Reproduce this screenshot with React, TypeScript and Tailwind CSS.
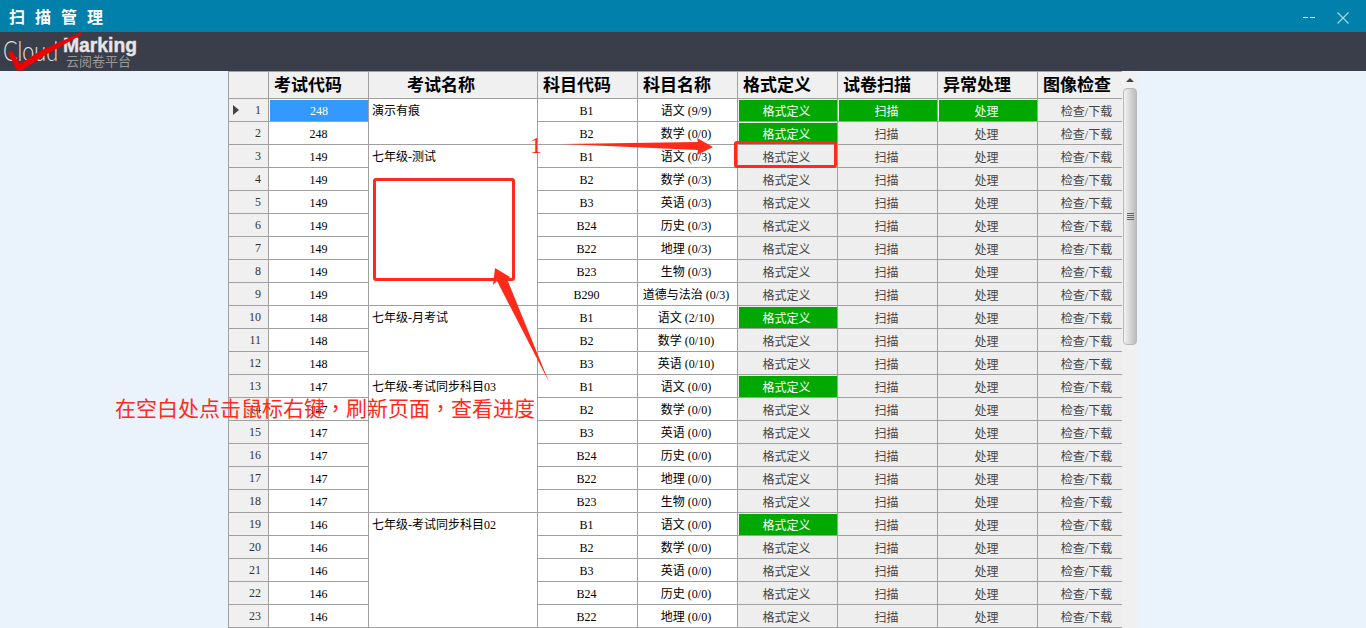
import React from 'react';

const FONT = '"Liberation Serif", "Noto Sans CJK SC", serif';
const UI_FONT = '"Liberation Sans", "Noto Sans CJK SC", sans-serif';

interface Subject {
  code: string;
  name: string;
  format?: boolean;
  scan?: boolean;
  fix?: boolean;
}

interface Exam {
  code: string;
  name: string;
  span: string;
  subjects: Subject[];
}

const exams: Exam[] = [
  {
    code: '248',
    name: '演示有痕',
    span: 'row-span-2',
    subjects: [
      { code: 'B1', name: '语文 (9/9)', format: true, scan: true, fix: true },
      { code: 'B2', name: '数学 (0/0)', format: true },
    ],
  },
  {
    code: '149',
    name: '七年级-测试',
    span: 'row-span-7',
    subjects: [
      { code: 'B1', name: '语文 (0/3)' },
      { code: 'B2', name: '数学 (0/3)' },
      { code: 'B3', name: '英语 (0/3)' },
      { code: 'B24', name: '历史 (0/3)' },
      { code: 'B22', name: '地理 (0/3)' },
      { code: 'B23', name: '生物 (0/3)' },
      { code: 'B290', name: '道德与法治 (0/3)' },
    ],
  },
  {
    code: '148',
    name: '七年级-月考试',
    span: 'row-span-3',
    subjects: [
      { code: 'B1', name: '语文 (2/10)', format: true },
      { code: 'B2', name: '数学 (0/10)' },
      { code: 'B3', name: '英语 (0/10)' },
    ],
  },
  {
    code: '147',
    name: '七年级-考试同步科目03',
    span: 'row-span-6',
    subjects: [
      { code: 'B1', name: '语文 (0/0)', format: true },
      { code: 'B2', name: '数学 (0/0)' },
      { code: 'B3', name: '英语 (0/0)' },
      { code: 'B24', name: '历史 (0/0)' },
      { code: 'B22', name: '地理 (0/0)' },
      { code: 'B23', name: '生物 (0/0)' },
    ],
  },
  {
    code: '146',
    name: '七年级-考试同步科目02',
    span: 'row-span-5',
    subjects: [
      { code: 'B1', name: '语文 (0/0)', format: true },
      { code: 'B2', name: '数学 (0/0)' },
      { code: 'B3', name: '英语 (0/0)' },
      { code: 'B24', name: '历史 (0/0)' },
      { code: 'B22', name: '地理 (0/0)' },
    ],
  },
];

const cell = 'border-r border-b border-[#a0a0a0]';

const HeadCell = ({ label, pad = 'pl-[5px]' }: { label?: string; pad?: string }) => (
  <div className={`${cell} ${pad} bg-[#f0f0f0] flex items-center text-[17px] leading-none font-bold text-black`}>
    {label}
  </div>
);

const ActionCell = ({ label, active }: { label: string; active?: boolean }) => (
  <div className={`${cell} bg-[#eeeeee] pl-px pt-px`}>
    <div className={`h-full flex items-center justify-center pr-[3px] pt-[3px] ${active ? 'bg-[#00a800] text-white' : 'text-[#444]'}`}>
      {label}
    </div>
  </div>
);

const Logo = () => (
  <svg width="140" height="39" viewBox="0 0 140 39">
    <text
      x="3"
      y="29"
      fontSize="28"
      fontWeight="300"
      fill="#e4e4e4"
      textLength="55"
      lengthAdjust="spacingAndGlyphs"
      fontFamily='Lato, "Open Sans", sans-serif'
    >
      Cloud
    </text>
    <text
      x="63"
      y="20"
      fontSize="21"
      fontWeight="700"
      fill="#e6e6e6"
      stroke="#e6e6e6"
      strokeWidth="0.4"
      textLength="74"
      lengthAdjust="spacingAndGlyphs"
      fontFamily='"Liberation Sans", sans-serif'
    >
      Marking
    </text>
    <text x="66" y="34" fontSize="13" fill="#999999" textLength="65" fontFamily='"Noto Sans CJK SC", sans-serif'>
      云阅卷平台
    </text>
    <path d="M8 21 L12 19 L20 32 L40 19 L82 0 L81 3 L42 25 L21 39 L17 38 Z" fill="#f00000" />
  </svg>
);

const Scrollbar = () => (
  <div className="w-[16px] bg-[#f0f0f0] flex flex-col items-center shrink-0">
    <div className="h-[17px] flex items-center justify-center">
      <div className="w-0 h-0 border-x-[4px] border-x-transparent border-b-[4px] border-b-[#444]" />
    </div>
    <div className="h-[257px] w-[14px] flex flex-col items-center justify-center gap-px rounded-sm border border-[#b8b8b8] bg-gradient-to-r from-[#f2f2f2] to-[#bcbcbc]">
      <div className="w-[7px] h-px bg-[#666]" />
      <div className="w-[7px] h-px bg-[#666]" />
      <div className="w-[7px] h-px bg-[#666]" />
      <div className="w-[7px] h-px bg-[#666]" />
    </div>
  </div>
);

const Comma = () => <span style={{ fontFamily: '"Noto Sans CJK TC", sans-serif' }}>，</span>;

const Annotations = () => (
  <>
    <svg className="absolute left-0 top-0 pointer-events-none" width="1366" height="628">
      <polygon points="562,144 698,142 697,138 713,147 697,155 698,150" fill="#ff2a1a" />
      <polygon points="549,382 507,279 510,277 495,268 493,285 497,281" fill="#ff2a1a" />
    </svg>
    <div className="absolute left-[734px] top-[141px] w-[103px] h-[27px] border-[3px] border-[#ff2a1a] rounded-[3px]" />
    <div className="absolute left-[373px] top-[178px] w-[142px] h-[103px] border-[3px] border-[#ff2a1a] rounded-[3px]" />
    <div className="absolute left-[530px] top-[131px] text-[24px] leading-[28px] text-[#ff2a1a]" style={{ fontFamily: FONT }}>
      1
    </div>
    <div
      className="absolute left-[115px] top-[392px] text-[21px] leading-[30px] whitespace-nowrap text-[#ff2a1a]"
      style={{ fontFamily: '"Noto Sans CJK SC", sans-serif' }}
    >
      在空白处点击鼠标右键<Comma />刷新页面<Comma />查看进度
    </div>
  </>
);

export default function App() {
  let rowNo = 0;

  return (
    <div className="relative h-[628px] w-[1366px] overflow-hidden bg-[#eaf2fb] flex flex-col" style={{ fontFamily: FONT }}>
      <div className="h-[32px] shrink-0 bg-[#0080aa] flex items-center justify-between pl-[9px] pr-[17px] pt-[3px]">
        <div className="text-[16px] font-bold text-white tracking-[10px]" style={{ fontFamily: UI_FONT }}>
          扫描管理
        </div>
        <div className="flex items-center gap-[22px]">
          <div className="flex gap-[2px]">
            <div className="w-[5px] h-px bg-white" />
            <div className="w-[5px] h-px bg-white" />
          </div>
          <svg width="12" height="12" viewBox="0 0 12 12" stroke="#a8d4e2" strokeWidth="1.2">
            <path d="M0.5 0.5 L11.5 11.5 M11.5 0.5 L0.5 11.5" />
          </svg>
        </div>
      </div>

      <div className="h-[39px] shrink-0 bg-[#3a3d4a]">
        <Logo />
      </div>

      <div className="flex-1 min-h-0 flex pl-[228px]">
        <div className="w-[894px] border-l border-t border-[#a0a0a0] overflow-hidden shrink-0 bg-white">
          <div className="w-[909px] grid grid-cols-[40px_100px_169px_100px_100px_100px_100px_100px_100px] grid-rows-[27px] auto-rows-[23px] text-[12px] text-black">
            <HeadCell />
            <HeadCell label="考试代码" />
            <HeadCell label="考试名称" pad="pl-[38px]" />
            <HeadCell label="科目代码" />
            <HeadCell label="科目名称" />
            <HeadCell label="格式定义" />
            <HeadCell label="试卷扫描" />
            <HeadCell label="异常处理" />
            <HeadCell label="图像检查" />

            {exams.map((exam) =>
              exam.subjects.map((subject, i) => {
                rowNo += 1;
                return (
                  <React.Fragment key={`${exam.code}-${subject.code}`}>
                    <div className={`${cell} bg-[#f0f0f0] flex items-center justify-between pl-[4px] pr-[7px] text-[#333]`}>
                      {rowNo === 1 ? (
                        <div className="w-0 h-0 border-y-[5px] border-y-transparent border-l-[6px] border-l-[#444]" />
                      ) : (
                        <div />
                      )}
                      <span>{rowNo}</span>
                    </div>
                    {rowNo === 1 ? (
                      <div className={`${cell} pl-px pt-px`}>
                        <div className="h-full bg-[#3399ff] text-white flex items-center justify-center">{exam.code}</div>
                      </div>
                    ) : (
                      <div className={`${cell} flex items-center justify-center pt-px`}>{exam.code}</div>
                    )}
                    {i === 0 && <div className={`${cell} ${exam.span} pl-[3px] leading-[25px]`}>{exam.name}</div>}
                    <div className={`${cell} flex items-center justify-center pr-[2px] pt-[2px]`}>{subject.code}</div>
                    <div className={`${cell} flex items-center justify-center pr-[3px] pt-[2px]`}>{subject.name}</div>
                    <ActionCell label="格式定义" active={subject.format} />
                    <ActionCell label="扫描" active={subject.scan} />
                    <ActionCell label="处理" active={subject.fix} />
                    <ActionCell label="检查/下载" />
                  </React.Fragment>
                );
              })
            )}
          </div>
        </div>
        <Scrollbar />
      </div>

      <Annotations />
    </div>
  );
}
